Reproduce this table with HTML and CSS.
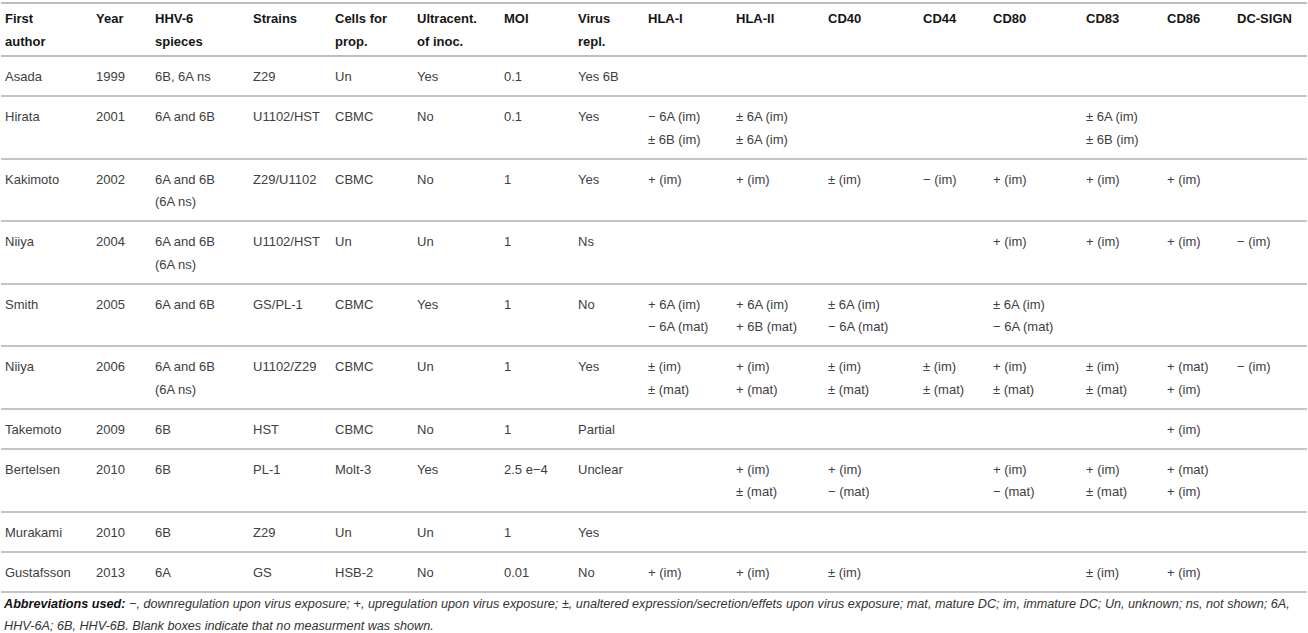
FILE: index.html
```html
<!DOCTYPE html>
<html lang="en">
<head>
  <meta charset="UTF-8" />
  <title>HHV-6 and dendritic cells</title>
  <link rel="stylesheet" href="styles.css">
</head>
<body>

  <table class="tabela">
    <colgroup>
      <col style="width:91px"><col style="width:59px"><col style="width:98px"><col style="width:82px">
      <col style="width:82px"><col style="width:87px"><col style="width:74px"><col style="width:70px">
      <col style="width:88px"><col style="width:92px"><col style="width:95px"><col style="width:70px">
      <col style="width:93px"><col style="width:81px"><col style="width:70px"><col style="width:74px">
    </colgroup>
    <thead>
      <tr>
        <th>First<br>author</th>
        <th>Year</th>
        <th>HHV-6<br>spieces</th>
        <th>Strains</th>
        <th>Cells for<br>prop.</th>
        <th>Ultracent.<br>of inoc.</th>
        <th>MOI</th>
        <th>Virus<br>repl.</th>
        <th>HLA-I</th>
        <th>HLA-II</th>
        <th>CD40</th>
        <th>CD44</th>
        <th>CD80</th>
        <th>CD83</th>
        <th>CD86</th>
        <th>DC-SIGN</th>
      </tr>
    </thead>
    <tbody>
      <tr>
        <td>Asada</td><td>1999</td><td>6B, 6A ns</td><td>Z29</td><td>Un</td><td>Yes</td><td>0.1</td><td>Yes 6B</td>
        <td></td><td></td><td></td><td></td><td></td><td></td><td></td><td></td>
      </tr>
      <tr>
        <td>Hirata</td><td>2001</td><td>6A and 6B</td><td>U1102/HST</td><td>CBMC</td><td>No</td><td>0.1</td><td>Yes</td>
        <td>&minus; 6A (im)<br>&plusmn; 6B (im)</td><td>&plusmn; 6A (im)<br>&plusmn; 6A (im)</td><td></td><td></td><td></td>
        <td>&plusmn; 6A (im)<br>&plusmn; 6B (im)</td><td></td><td></td>
      </tr>
      <tr>
        <td>Kakimoto</td><td>2002</td><td>6A and 6B<br>(6A ns)</td><td>Z29/U1102</td><td>CBMC</td><td>No</td><td>1</td><td>Yes</td>
        <td>+ (im)</td><td>+ (im)</td><td>&plusmn; (im)</td><td>&minus; (im)</td><td>+ (im)</td><td>+ (im)</td><td>+ (im)</td><td></td>
      </tr>
      <tr>
        <td>Niiya</td><td>2004</td><td>6A and 6B<br>(6A ns)</td><td>U1102/HST</td><td>Un</td><td>Un</td><td>1</td><td>Ns</td>
        <td></td><td></td><td></td><td></td><td>+ (im)</td><td>+ (im)</td><td>+ (im)</td><td>&minus; (im)</td>
      </tr>
      <tr>
        <td>Smith</td><td>2005</td><td>6A and 6B</td><td>GS/PL-1</td><td>CBMC</td><td>Yes</td><td>1</td><td>No</td>
        <td>+ 6A (im)<br>&minus; 6A (mat)</td><td>+ 6A (im)<br>+ 6B (mat)</td><td>&plusmn; 6A (im)<br>&minus; 6A (mat)</td><td></td>
        <td>&plusmn; 6A (im)<br>&minus; 6A (mat)</td><td></td><td></td><td></td>
      </tr>
      <tr>
        <td>Niiya</td><td>2006</td><td>6A and 6B<br>(6A ns)</td><td>U1102/Z29</td><td>CBMC</td><td>Un</td><td>1</td><td>Yes</td>
        <td>&plusmn; (im)<br>&plusmn; (mat)</td><td>+ (im)<br>+ (mat)</td><td>&plusmn; (im)<br>&plusmn; (mat)</td><td>&plusmn; (im)<br>&plusmn; (mat)</td>
        <td>+ (im)<br>&plusmn; (mat)</td><td>&plusmn; (im)<br>&plusmn; (mat)</td><td>+ (mat)<br>+ (im)</td><td>&minus; (im)</td>
      </tr>
      <tr>
        <td>Takemoto</td><td>2009</td><td>6B</td><td>HST</td><td>CBMC</td><td>No</td><td>1</td><td>Partial</td>
        <td></td><td></td><td></td><td></td><td></td><td></td><td>+ (im)</td><td></td>
      </tr>
      <tr>
        <td>Bertelsen</td><td>2010</td><td>6B</td><td>PL-1</td><td>Molt-3</td><td>Yes</td><td>2.5 e&minus;4</td><td>Unclear</td>
        <td></td><td>+ (im)<br>&plusmn; (mat)</td><td>+ (im)<br>&minus; (mat)</td><td></td>
        <td>+ (im)<br>&minus; (mat)</td><td>+ (im)<br>&plusmn; (mat)</td><td>+ (mat)<br>+ (im)</td><td></td>
      </tr>
      <tr>
        <td>Murakami</td><td>2010</td><td>6B</td><td>Z29</td><td>Un</td><td>Un</td><td>1</td><td>Yes</td>
        <td></td><td></td><td></td><td></td><td></td><td></td><td></td><td></td>
      </tr>
      <tr>
        <td>Gustafsson</td><td>2013</td><td>6A</td><td>GS</td><td>HSB-2</td><td>No</td><td>0.01</td><td>No</td>
        <td>+ (im)</td><td>+ (im)</td><td>&plusmn; (im)</td><td></td><td></td><td>&plusmn; (im)</td><td>+ (im)</td><td></td>
      </tr>
    </tbody>
  </table>

  <p class="nota">
    <b>Abbreviations used:</b> &minus;, downregulation upon virus exposure; +, upregulation upon virus exposure; &plusmn;, unaltered expression/secretion/effets upon virus exposure; mat, mature DC; im, immature DC; Un, unknown; ns, not shown; 6A,<br>
    HHV-6A; 6B, HHV-6B. Blank boxes indicate that no measurment was shown.
  </p>

</body>
</html>
```

FILE: styles.css
```css
* {
  box-sizing: border-box;
  margin: 0;
  padding: 0;
}

body {
  font-family: "Liberation Sans", Arial, sans-serif;
  background-color: #fff;
  color: #404040;
  padding: 2px 1px 0 1px;
}

/* TABELA */
.tabela {
  width: 1306px;
  border-collapse: collapse;
  table-layout: fixed;
  font-size: 13px;
  line-height: 22.25px;
}

.tabela th {
  text-align: left;
  vertical-align: top;
  font-weight: bold;
  color: #151515;
  line-height: 22.5px;
  padding: 4px 4px 2px 4px;
  border-top: 2px solid #bdbdbd;
  border-bottom: 2px solid #bdbdbd;
}

.tabela td {
  text-align: left;
  vertical-align: top;
  padding: 9px 4px 7px 4px;
  border-bottom: 2px solid #c4c4c4;
  white-space: nowrap;
}

.nota {
  font-size: 12.65px;
  font-style: italic;
  line-height: 21.5px;
  padding: 1px 3px 0 3px;
  white-space: nowrap;
  color: #333;
}

.nota b {
  color: #111;
}
```
